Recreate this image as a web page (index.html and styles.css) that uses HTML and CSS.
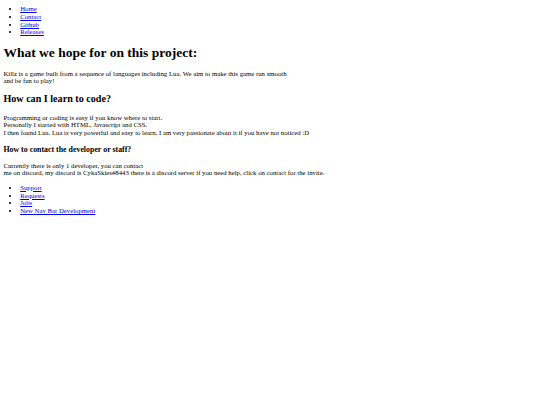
FILE: index.html
```html
<!DOCTYPE html>
<html>
<head>
<meta charset="utf-8">
<title>Killz</title>
<link rel="stylesheet" href="styles.css">
</head>
<body class="page">
<ul class="nav nav-top">
<li><a href="#">Home</a></li>
<li><a href="#">Contact</a></li>
<li><a href="#">Github</a></li>
<li><a href="#">Releases</a></li>
</ul>
<h1 class="title">What we hope for on this project:</h1>
<p class="text">Killz is a game built from a sequence of languages including Lua. We aim to make this game run smooth<br>and be fun to play!</p>
<h2 class="sub">How can I learn to code?</h2>
<p class="text">Programming or coding is easy if you know where to start.<br>Personally I started with HTML, Javascript and CSS.<br>I then found Lua. Lua is very powerful and easy to learn, I am very passionate about it if you have not noticed :D</p>
<h3 class="minor">How to contact the developer or staff?</h3>
<p class="text">Currently there is only 1 developer, you can contact<br>me on discord, my discord is CykaSkies#8443 there is a discord server if you need help, click on contact for the invite.</p>
<ul class="nav">
<li><a href="#">Support</a></li>
<li><a href="#">Requests</a></li>
<li><a href="#">Jobs</a></li>
<li><a href="#">New Nav Bar Development</a></li>
</ul>
</body>
</html>
```
FILE: styles.css
```css
.page {
  margin: 0 3.4px 3.4px;
  font-family: "Liberation Serif", "Times New Roman", serif;
  font-size: 6.75px;
  line-height: 1.15;
  color: #000;
  background: #fff;
}
.nav {
  margin: 1em 0;
  padding-left: 16.8px;
  list-style: disc;
}
.nav-top {
  margin-top: 5px;
}
.nav a {
  color: #0000ee;
  text-decoration: underline;
}
.title {
  font-size: 2em;
  margin: 0.67em 0;
  font-weight: bold;
}
.sub {
  font-size: 1.5em;
  margin: 0.83em 0;
  font-weight: bold;
}
.minor {
  font-size: 1.17em;
  margin: 1em 0;
  font-weight: bold;
}
.text {
  margin: 1em 0;
}
```
